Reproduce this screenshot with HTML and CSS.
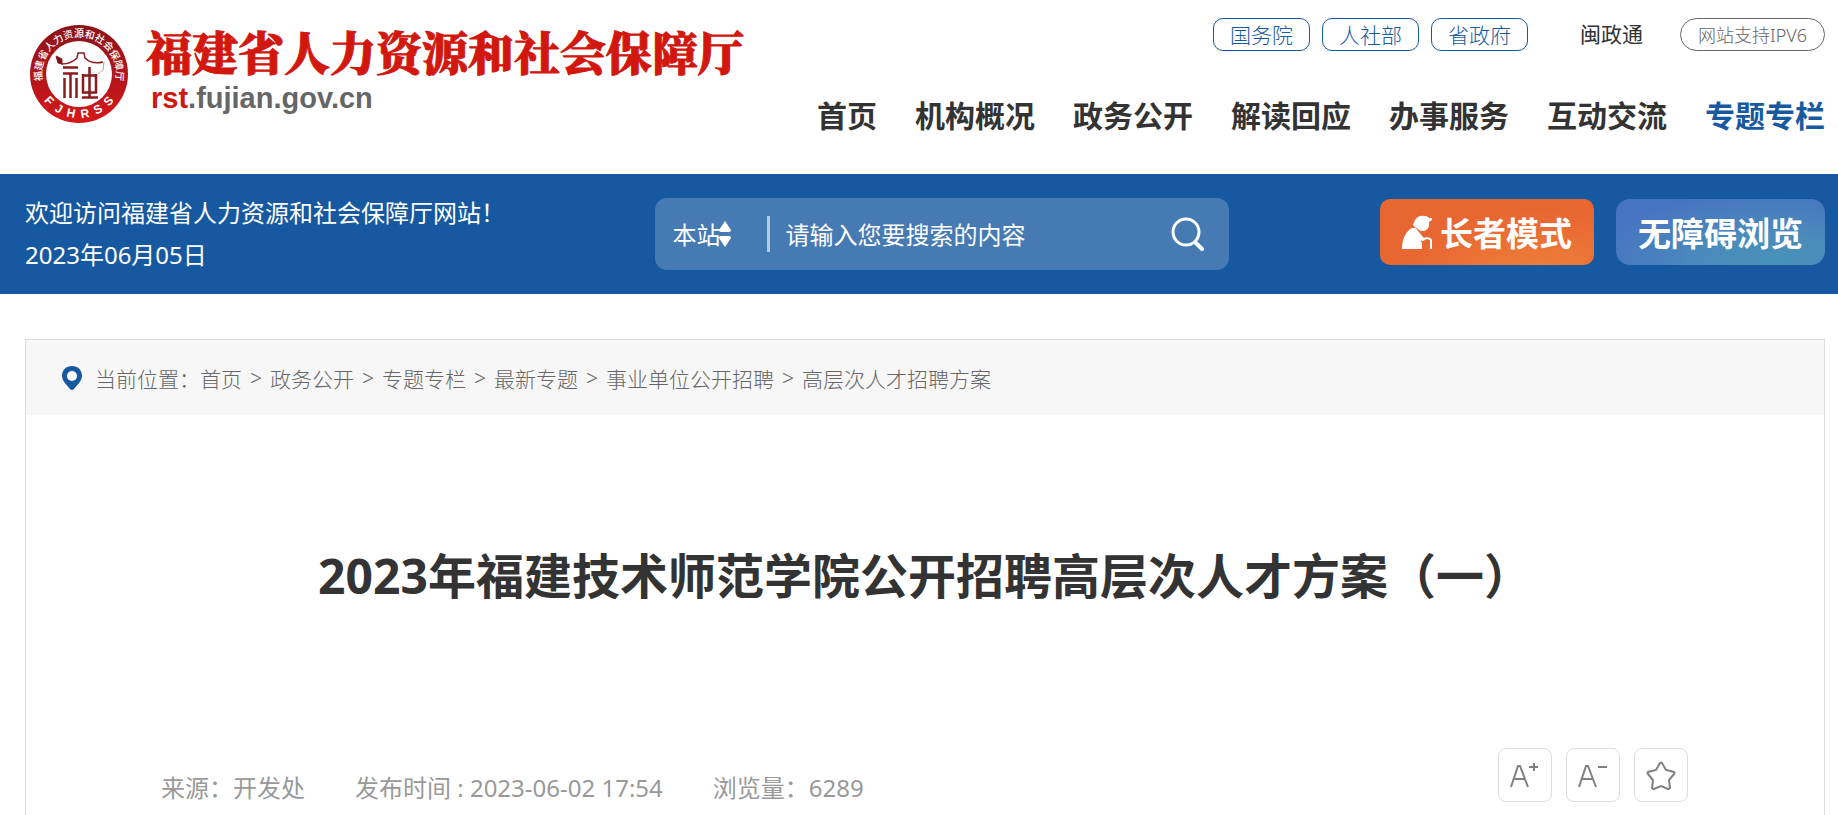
FILE: index.html
```html
<!DOCTYPE html>
<html lang="zh-CN">
<head>
    <meta charset="UTF-8">
    <meta name="viewport" content="width=device-width, initial-scale=1.0">
    <title>2023年福建技术师范学院公开招聘高层次人才方案（一）</title>
    <link rel="stylesheet" href="styles.css">
</head>
<body>
    <header class="header">
        <a class="logo" href="#">
            <svg class="seal" viewBox="0 0 100 100" width="100" height="100" aria-hidden="true">
                <defs>
                    <linearGradient id="sealRed" x1="0" y1="0" x2="0" y2="1">
                        <stop offset="0" stop-color="#8a1319"/>
                        <stop offset="0.6" stop-color="#b8161b"/>
                        <stop offset="1" stop-color="#d6181a"/>
                    </linearGradient>
                    <path id="arcTop" d="M14.400 60A37 37 0 1 1 85.600 60"/>
                    <path id="arcBottom" d="M6 50A44 44 0 0 0 94 50"/>
                </defs>
                <circle cx="50" cy="50" r="49" fill="url(#sealRed)"/>
                <circle cx="50" cy="50" r="33" fill="#fff"/>
                <text class="seal-cn"><textPath href="#arcTop" startOffset="50%" text-anchor="middle">福建省人力资源和社会保障厅</textPath></text>
                <text class="seal-en"><textPath href="#arcBottom" startOffset="50%" text-anchor="middle">F&nbsp;&nbsp;J&nbsp;&nbsp;H&nbsp;&nbsp;R&nbsp;&nbsp;S&nbsp;&nbsp;S</textPath></text>
                <g fill="none" stroke="#8a1a1e">
                    <path d="M29 35l4 5c7 0 11-2 15-6l1-5h6l1 5c4 4 10 6 18 4" stroke-width="1.500"/>
                    <path d="M27 32l6 3v5l-4-1z" fill="#7a1216" stroke-width="1"/>
                    <path d="M75 38l-1 8-5 4" stroke="#c99" stroke-width="1"/>
                    <path d="M34 43.500h15M34 49.500h15M35.500 54v20M41.500 50v24M47.500 54v20M53 73.500h16M54 50v19M67 50v19M60.500 43v30M53 51.500h15M53 68.500h15" stroke-width="2.500"/>
                </g>
            </svg>
            <span class="logo-text">
                <span class="logo-name">福建省人力资源和社会保障厅</span>
                <span class="logo-url"><b>rst</b>.fujian.gov.cn</span>
            </span>
        </a>
        <div class="header-right">
            <div class="top-links">
                <a class="pill" href="#">国务院</a>
                <a class="pill" href="#">人社部</a>
                <a class="pill" href="#">省政府</a>
                <a class="mzt" href="#">闽政通</a>
                <a class="pill ipv6" href="#">网站支持IPV6</a>
            </div>
            <nav class="nav">
                <a href="#">首页</a>
                <a href="#">机构概况</a>
                <a href="#">政务公开</a>
                <a href="#">解读回应</a>
                <a href="#">办事服务</a>
                <a href="#">互动交流</a>
                <a class="active" href="#">专题专栏</a>
            </nav>
        </div>
    </header>

    <div class="banner">
        <div class="welcome">
            <div>欢迎访问福建省人力资源和社会保障厅网站！</div>
            <div>2023年06月05日</div>
        </div>
        <form class="search">
            <div class="scope">
                <select aria-label="搜索范围">
                    <option>本站</option>
                </select>
                <svg class="scope-arrow" viewBox="0 0 14 28" width="14" height="28" aria-hidden="true">
                    <path d="M7 1l6 9q0 2-2 2H3q-2 0-2-2zM7 27l6-9q0-2-2-2H3q-2 0-2 2z" fill="#fff"/>
                </svg>
            </div>
            <input type="text" placeholder="请输入您要搜索的内容" aria-label="搜索内容">
            <button type="submit" aria-label="搜索">
                <svg viewBox="0 0 34 34" width="34" height="34" fill="none" stroke="#fff" stroke-linecap="round" aria-hidden="true">
                    <circle cx="15" cy="15" r="13" stroke-width="3"/>
                    <path d="M25 26l6 6" stroke-width="4"/>
                </svg>
            </button>
        </form>
        <div class="modes">
            <button class="mode elder" type="button">
                <svg viewBox="0 0 30 34" width="30" height="34" fill="#fff" aria-hidden="true">
                    <path d="M12 8C13 3 17 0 22 1c3 0 5 1 5 2h3v2l-3 2c1 5-2 9-6 9-3 0-5-1-6-3-2 0-4-2-4-4z"/>
                    <path d="M0 34C0 24 4 16 10 13h4c2 3 5 7 8 10l-3 3 1 3v5z"/>
                    <path d="M21 26c0-3 6-4 8-1v9" fill="none" stroke="#fff" stroke-width="2"/>
                </svg>
                长者模式
            </button>
            <button class="mode barrier-free" type="button">无障碍浏览</button>
        </div>
    </div>

    <main class="panel">
        <div class="crumbs">
            <svg viewBox="0 0 22 26" width="22" height="26" aria-hidden="true">
                <path d="M11 1C5 1 1 5 1 11c0 5 5 9 8 13q2 2 4 0c3-4 8-8 8-13C21 5 17 1 11 1z" fill="#1659a0"/>
                <circle cx="11" cy="11" r="5" fill="#fff"/>
            </svg>
            <span>当前位置：</span>
            <a href="#">首页</a><i>&gt;</i>
            <a href="#">政务公开</a><i>&gt;</i>
            <a href="#">专题专栏</a><i>&gt;</i>
            <a href="#">最新专题</a><i>&gt;</i>
            <a href="#">事业单位公开招聘</a><i>&gt;</i>
            <a href="#">高层次人才招聘方案</a>
        </div>
        <h1>2023年福建技术师范学院公开招聘高层次人才方案（一）</h1>
        <div class="meta">
            <span>来源：开发处</span>
            <span>发布时间 : 2023-06-02 17:54</span>
            <span>浏览量：6289</span>
            <div class="tools">
                <button type="button" aria-label="放大字号">
                    <svg viewBox="0 0 30 30" width="30" height="30" aria-hidden="true">
                        <path d="M1 27L8 6h2l8 21M4 19h11M19 7h9M24 3v8"/>
                    </svg>
                </button>
                <button type="button" aria-label="缩小字号">
                    <svg viewBox="0 0 30 30" width="30" height="30" aria-hidden="true">
                        <path d="M1 27L8 6h2l8 21M4 19h11M20 7h9"/>
                    </svg>
                </button>
                <button type="button" aria-label="收藏">
                    <svg viewBox="0 0 30 30" width="30" height="30" aria-hidden="true">
                        <path d="M14 3q1-1 2 0l4 7 8 2q1 1 0 2l-5 6 1 8q-1 1-2 1l-7-3-7 3q-1 0-2-1l1-8-5-6q-1-1 0-2l8-2z"/>
                    </svg>
                </button>
            </div>
        </div>
    </main>
</body>
</html>
```
FILE: styles.css
```css
* {
    box-sizing: border-box;
}
body {
    display: flex;
    flex-direction: column;
    min-height: 100vh;
    margin: 0;
    background-color: #fff;
    color: #333;
    font-family: "Noto Sans", "Noto Sans CJK SC", sans-serif;
}
a {
    color: inherit;
    text-decoration: none;
}
button {
    padding: 0;
    border: none;
    background: none;
    font-family: inherit;
    cursor: pointer;
}
svg {
    display: block;
    flex: none;
}

.header {
    display: flex;
    justify-content: space-between;
    padding: 18px 13px 38px 29px;
}
.logo {
    display: flex;
    gap: 17px;
    padding-top: 6px;
}
.seal-cn {
    fill: #fff;
    font-size: 10px;
    font-weight: 500;
}
.seal-en {
    fill: #fff;
    font-family: "Liberation Sans", Arial, sans-serif;
    font-size: 12px;
    font-weight: bold;
}
.logo-text {
    display: flex;
    flex-direction: column;
}
.logo-name {
    color: #d2170f;
    font-family: "Noto Serif CJK SC", "Noto Sans CJK SC", serif;
    font-size: 46px;
    font-weight: 900;
    line-height: 52px;
    -webkit-text-stroke: 1px #d2170f;
}
.logo-url {
    padding-left: 5px;
    color: #666;
    font-family: "Liberation Sans", Arial, sans-serif;
    font-size: 29px;
    font-weight: bold;
    line-height: 44px;
}
.logo-url b {
    color: #d2170f;
}
.header-right {
    display: flex;
    flex-direction: column;
    align-items: flex-end;
    gap: 45px;
}
.top-links {
    display: flex;
    gap: 12px;
    font-size: 21px;
    font-weight: 300;
    line-height: 32px;
}
.pill {
    height: 33px;
    padding: 0 16px;
    border: 1px solid #1659a0;
    border-radius: 10px;
    color: #1659a0;
}
.mzt {
    margin: 0 25px 0 40px;
    font-weight: 400;
}
.ipv6 {
    padding: 0 17px;
    border-color: #666;
    border-radius: 17px;
    color: #666;
    font-size: 18px;
}
.nav {
    display: flex;
    gap: 38px;
    font-size: 30px;
    font-weight: bold;
    line-height: 40px;
}
.nav .active {
    color: #1659a0;
}

.banner {
    display: grid;
    grid-template-columns: 19fr 574px 18fr;
    align-items: center;
    height: 120px;
    padding: 0 13px 0 25px;
    background-color: #1659a0;
    color: #fff;
}
.welcome {
    font-size: 24px;
    line-height: 42px;
}
.search {
    display: flex;
    align-items: center;
    height: 72px;
    padding: 0 24px 0 18px;
    border-radius: 12px;
    background-color: #457ab3;
}
.scope {
    position: relative;
    width: 97px;
    border-right: 3px solid #b5cae1;
}
.scope select {
    display: block;
    width: 80px;
    height: 36px;
    padding: 0;
    border: none;
    background: none;
    appearance: none;
    color: #fff;
    font-family: inherit;
    font-size: 24px;
}
.scope-arrow {
    position: absolute;
    top: 4px;
    left: 45px;
    pointer-events: none;
}
.search input {
    flex: 1;
    min-width: 0;
    height: 48px;
    padding: 0 16px;
    border: none;
    background: none;
    color: #fff;
    font-family: inherit;
    font-size: 24px;
}
.search input::placeholder {
    color: #fff;
}
.modes {
    display: flex;
    justify-content: flex-end;
    gap: 22px;
    padding-bottom: 4px;
}
.mode {
    display: flex;
    align-items: center;
    justify-content: center;
    gap: 8px;
    height: 66px;
    padding: 0 22px;
    border-radius: 10px;
    color: #fff;
    font-size: 33px;
    font-weight: bold;
}
.elder {
    background: radial-gradient(ellipse at 75% 120%, #ee8239, #e86632 60%);
}
.barrier-free {
    border-radius: 14px;
    background: radial-gradient(ellipse at 75% 90%, #4792b8, #4a8bbb 30%, #4774c2 80%);
}

.panel {
    flex: 1;
    margin: 45px 13px 0 25px;
    border: 1px solid #ddd;
    border-bottom: none;
}
.crumbs {
    display: flex;
    align-items: center;
    height: 75px;
    padding-left: 35px;
    background-color: #f7f7f7;
    color: #666;
    font-size: 21px;
    font-weight: 300;
}
.crumbs svg {
    margin-right: 12px;
}
.crumbs i {
    width: 28px;
    font-style: normal;
    text-align: center;
}
h1 {
    margin: 125px 0 136px;
    font-size: 48px;
    line-height: 72px;
    text-align: center;
}
.meta {
    display: flex;
    align-items: flex-end;
    gap: 50px;
    padding: 0 136px 0 135px;
    color: #999;
    font-size: 24px;
    line-height: 28px;
}
.tools {
    display: flex;
    gap: 14px;
    margin-left: auto;
}
.tools button {
    display: flex;
    align-items: center;
    justify-content: center;
    width: 54px;
    height: 54px;
    border: 1px solid #ddd;
    border-radius: 8px;
}
.tools path {
    fill: none;
    stroke: #808080;
    stroke-width: 2;
}
```
